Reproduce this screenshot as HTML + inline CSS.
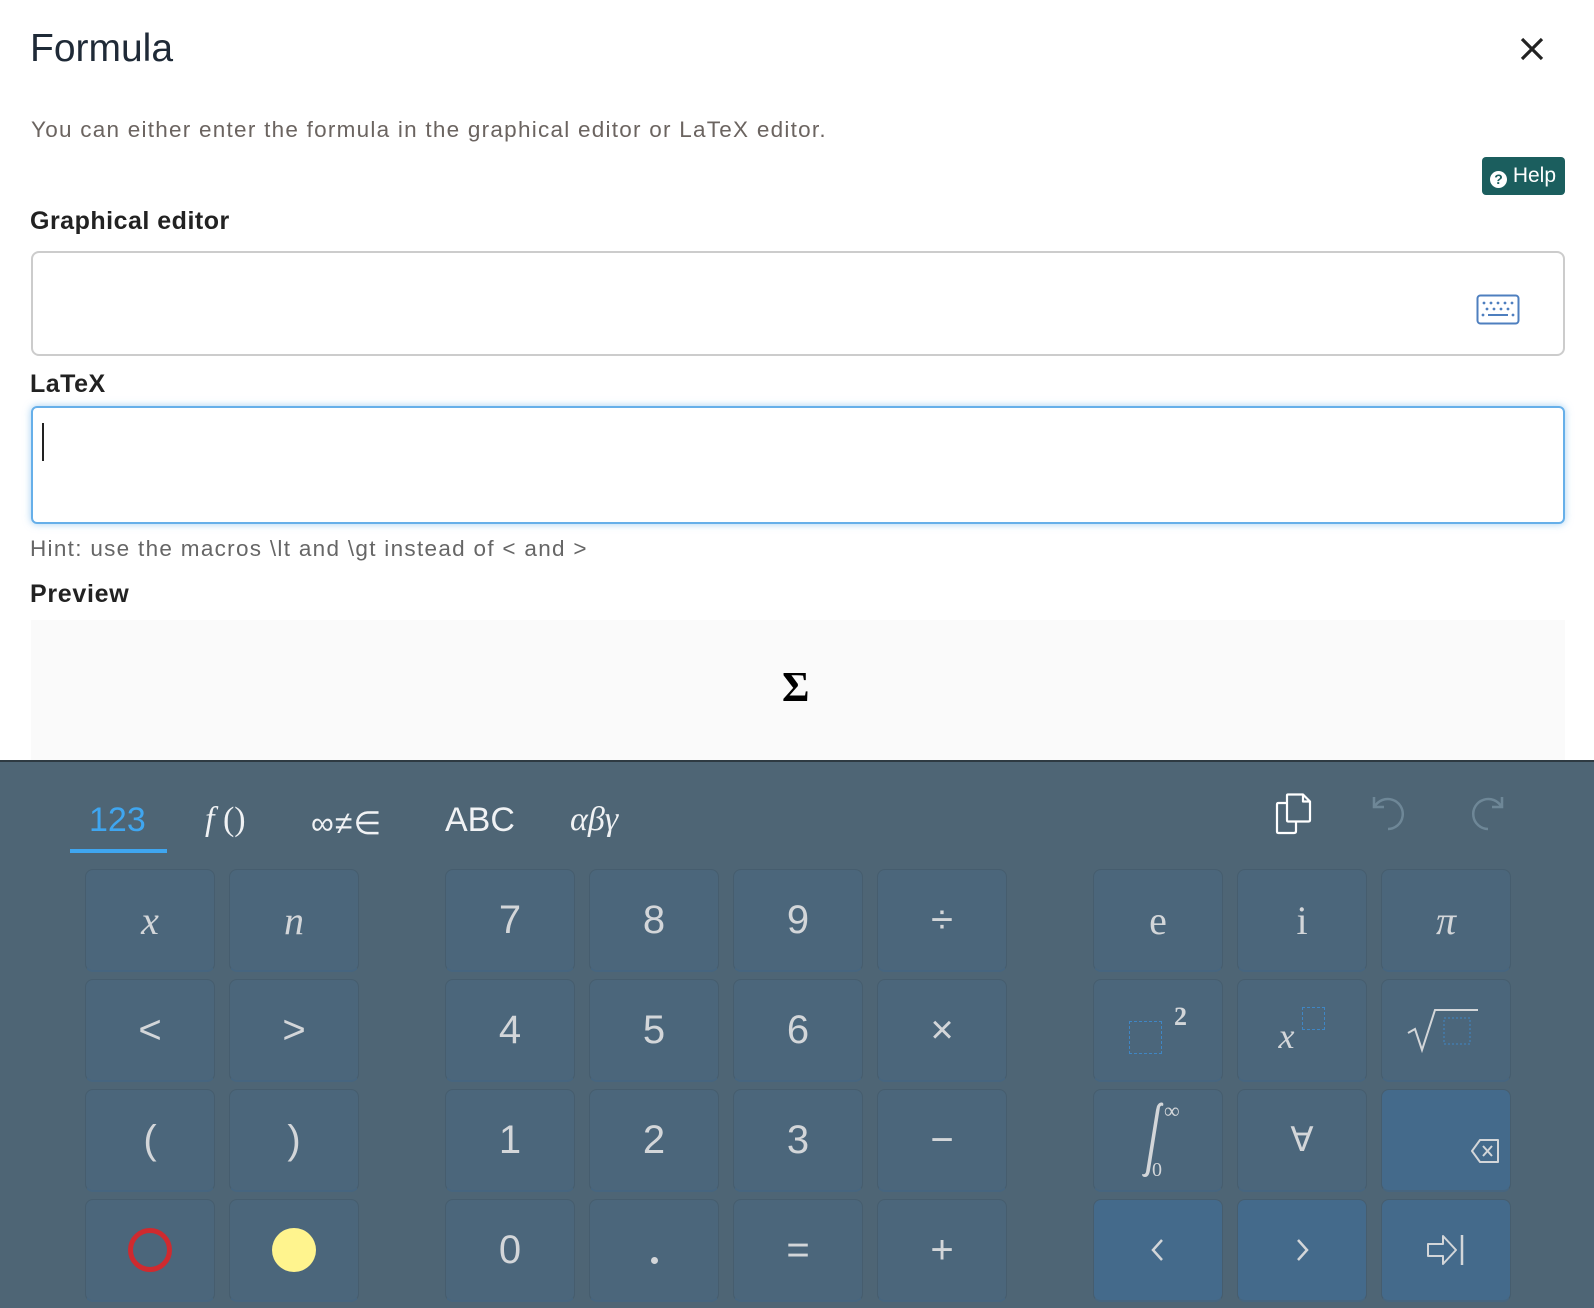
<!DOCTYPE html>
<html><head><meta charset="utf-8"><style>
*{box-sizing:border-box;margin:0;padding:0}
body{width:1594px;height:1308px;position:relative;background:#fff;font-family:"Liberation Sans",sans-serif;overflow:hidden}
.a{position:absolute;white-space:nowrap}
.kb{position:absolute;left:0;top:760px;width:1594px;height:548px;background:#4e6575;border-top:2px solid #2e3a42}
.k{position:absolute;width:130px;height:103px;background:#4b667b;border:1px solid #465d6e;border-bottom:2px solid #46657f;border-radius:8px;color:#d3d6d9;font-size:40px;display:flex;align-items:center;justify-content:center}
.act{background:#446a8b}
.ser{font-family:"Liberation Serif",serif;font-style:italic}
.tab{position:absolute;top:801px;color:#f0f2f4;font-size:34px}
</style></head><body>
<div class="a" style="left:30px;top:27px;font-size:39px;color:#1f2a37">Formula</div>
<svg class="a" style="left:1519px;top:36px" width="26" height="26"><path d="M3 3L23 23M23 3L3 23" stroke="#222" stroke-width="3.2"/></svg>
<div class="a" style="left:31px;top:117px;font-size:22.5px;letter-spacing:1.25px;color:#6b6460">You can either enter the formula in the graphical editor or LaTeX editor.</div>
<div class="a" style="left:1482px;top:157px;width:83px;height:38px;background:#1b5e5e;border-radius:4px;color:#fff;font-size:21px;line-height:38px;padding-left:8px"><span style="display:inline-block;width:17px;height:17px;border-radius:50%;background:#fff;color:#1b5e5e;font-size:14px;line-height:17px;text-align:center;font-weight:bold;vertical-align:-2px">?</span> Help</div>
<div class="a" style="left:30px;top:207px;font-size:25px;font-weight:bold;color:#222;letter-spacing:.5px">Graphical editor</div>
<div class="a" style="left:31px;top:251px;width:1534px;height:105px;border:2px solid #ccc;border-radius:8px"></div>
<svg class="a" style="left:1476px;top:294px" width="44" height="31"><rect x="1.5" y="1.5" width="41" height="28" rx="3" fill="none" stroke="#4e7fbf" stroke-width="2"/><g fill="#4e7fbf"><circle cx="8" cy="9" r="1.4"/><circle cx="15" cy="9" r="1.4"/><circle cx="22" cy="9" r="1.4"/><circle cx="29" cy="9" r="1.4"/><circle cx="36" cy="9" r="1.4"/><circle cx="11" cy="15" r="1.4"/><circle cx="18" cy="15" r="1.4"/><circle cx="25" cy="15" r="1.4"/><circle cx="32" cy="15" r="1.4"/><circle cx="7" cy="21" r="1.4"/><circle cx="37" cy="21" r="1.4"/><rect x="12" y="20" width="20" height="2"/></g></svg>
<div class="a" style="left:30px;top:370px;font-size:25px;font-weight:bold;color:#222;letter-spacing:.5px">LaTeX</div>
<div class="a" style="left:31px;top:406px;width:1534px;height:118px;border:2px solid #66afe9;border-radius:6px;box-shadow:0 0 8px rgba(102,175,233,.6)"></div>
<div class="a" style="left:42px;top:423px;width:2px;height:38px;background:#222"></div>
<div class="a" style="left:30px;top:536px;font-size:22.5px;letter-spacing:1.3px;color:#666">Hint: use the macros \lt and \gt instead of &lt; and &gt;</div>
<div class="a" style="left:30px;top:580px;font-size:25px;font-weight:bold;color:#222;letter-spacing:.7px">Preview</div>
<div class="a" style="left:31px;top:620px;width:1534px;height:140px;background:#fafafa"></div>
<div class="a" style="left:782px;top:664px;font-size:42px;font-weight:bold;font-family:'Liberation Serif',serif;color:#000">Σ</div>

<div class="kb"></div>
<div class="tab" style="left:89px;color:#3fa6f0">123</div>
<div class="a" style="left:70px;top:849px;width:97px;height:4px;background:#3fa6f0"></div>
<div class="tab ser" style="left:205px">f<span style="font-style:normal"> ()</span></div>
<div class="tab" style="left:311px;font-size:32px;top:804px;letter-spacing:1px">∞≠∈</div>
<div class="tab" style="left:445px">ABC</div>
<div class="tab ser" style="left:570px">αβγ</div>
<svg class="a" style="left:1275px;top:793px" width="38" height="42"><path d="M12 6V2.5Q12 1.5 13 1.5H28L35 8.5V27Q35 28.5 33.5 28.5H13Q12 28.5 12 27V6M28 1.5V8.5H35M12 10H3.5Q2 10 2 11.5V38.5Q2 40 3.5 40H19Q21 40 21 38V29" fill="none" stroke="#fff" stroke-width="2.2" stroke-linejoin="round"/></svg>
<svg class="a" style="left:1368px;top:793px" width="44" height="42"><path d="M6 4V14H16M6.5 14A15 15 0 1 1 20 36" fill="none" stroke="#6e8797" stroke-width="2.5"/></svg>
<svg class="a" style="left:1464px;top:793px" width="44" height="42"><path d="M38 4V14H28M37.5 14A15 15 0 1 0 24 36" fill="none" stroke="#6e8797" stroke-width="2.5"/></svg>

<div class="k ser" style="left:85px;top:869px">x</div>
<div class="k ser" style="left:229px;top:869px">n</div>
<div class="k" style="left:445px;top:869px">7</div>
<div class="k" style="left:589px;top:869px">8</div>
<div class="k" style="left:733px;top:869px">9</div>
<div class="k" style="left:877px;top:869px">÷</div>
<div class="k" style="left:1093px;top:869px;font-family:'Liberation Serif',serif">e</div>
<div class="k" style="left:1237px;top:869px;font-family:'Liberation Serif',serif">i</div>
<div class="k ser" style="left:1381px;top:869px">π</div>

<div class="k" style="left:85px;top:979px">&lt;</div>
<div class="k" style="left:229px;top:979px">&gt;</div>
<div class="k" style="left:445px;top:979px">4</div>
<div class="k" style="left:589px;top:979px">5</div>
<div class="k" style="left:733px;top:979px">6</div>
<div class="k" style="left:877px;top:979px">×</div>
<div class="k" style="left:1093px;top:979px"><span style="display:inline-block;width:33px;height:33px;border:1px dashed #3f86c4;margin-top:14px"></span><span style="font-family:'Liberation Serif',serif;font-size:26px;font-weight:bold;margin:-26px 0 0 12px">2</span></div>
<div class="k" style="left:1237px;top:979px"><span class="ser" style="font-size:36px;margin-top:12px">x</span><span style="display:inline-block;width:23px;height:23px;border:1px dashed #3f86c4;margin:-24px 0 0 8px"></span></div>
<div class="k" style="left:1381px;top:979px"><svg width="80" height="45"><path d="M2 25L9 21L16 42L29 2H72" fill="none" stroke="#d3d6d9" stroke-width="2"/><rect x="38" y="10" width="26" height="26" fill="none" stroke="#3f86c4" stroke-dasharray="2 2"/></svg></div>

<div class="k" style="left:85px;top:1089px">(</div>
<div class="k" style="left:229px;top:1089px">)</div>
<div class="k" style="left:445px;top:1089px">1</div>
<div class="k" style="left:589px;top:1089px">2</div>
<div class="k" style="left:733px;top:1089px">3</div>
<div class="k" style="left:877px;top:1089px">−</div>
<div class="k" style="left:1093px;top:1089px"><svg width="60" height="80"><path d="M29 6Q31 2 34 2.5Q36 3 35 6Q33 5 32 7L22 70Q21 77 17 77Q14 77 14 74Q17 75 18 72L28 10Z" fill="#d3d6d9"/><text x="36" y="18" font-family="Liberation Serif" font-size="22" fill="#d3d6d9">∞</text><text x="24" y="76" font-family="Liberation Serif" font-size="20" fill="#d3d6d9">0</text></svg></div>
<div class="k" style="left:1237px;top:1089px;font-size:34px">∀</div>
<div class="k act" style="left:1381px;top:1089px"><svg style="position:absolute;left:88px;top:48px" width="30" height="26"><path d="M10 2H28V24H10L2 13Z" fill="none" stroke="#d3d6d9" stroke-width="2" stroke-linejoin="round"/><path d="M13 8L22 18M22 8L13 18" stroke="#d3d6d9" stroke-width="2"/></svg></div>

<div class="k" style="left:85px;top:1199px"><span style="width:44px;height:44px;border:5px solid #cf2a2f;border-radius:50%"></span></div>
<div class="k" style="left:229px;top:1199px"><span style="width:44px;height:44px;background:#fff48e;border-radius:50%"></span></div>
<div class="k" style="left:445px;top:1199px">0</div>
<div class="k" style="left:589px;top:1199px"><span style="width:7px;height:7px;background:#d3d6d9;border-radius:50%;margin-top:20px"></span></div>
<div class="k" style="left:733px;top:1199px">=</div>
<div class="k" style="left:877px;top:1199px">+</div>
<div class="k act" style="left:1093px;top:1199px"><svg width="20" height="30"><path d="M14 5L5 15L14 25" fill="none" stroke="#d3d6d9" stroke-width="2.5"/></svg></div>
<div class="k act" style="left:1237px;top:1199px"><svg width="20" height="30"><path d="M6 5L15 15L6 25" fill="none" stroke="#d3d6d9" stroke-width="2.5"/></svg></div>
<div class="k act" style="left:1381px;top:1199px"><svg width="40" height="34"><path d="M2 11H17V3L30 17L17 31V23H2Z" fill="none" stroke="#d3d6d9" stroke-width="2" stroke-linejoin="round"/><path d="M36 2V32" stroke="#d3d6d9" stroke-width="2.5"/></svg></div>
</body></html>
